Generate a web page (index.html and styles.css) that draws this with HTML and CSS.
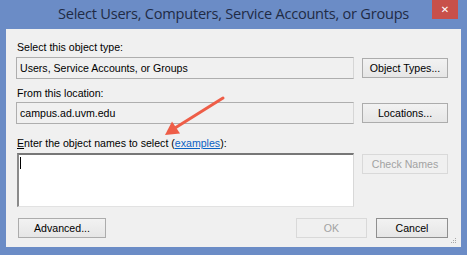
FILE: index.html
```html
<!DOCTYPE html>
<html>
<head>
<meta charset="utf-8">
<link rel="stylesheet" href="styles.css">
</head>
<body>
<div class="window">
  <div class="titlebar">
    <div class="title">Select Users, Computers, Service Accounts, or Groups</div>
    <div class="close">&#x2715;</div>
  </div>
  <div class="panel">
    <div class="label">Select this object type:</div>
    <div class="row">
      <div class="field">Users, Service Accounts, or Groups</div>
      <div class="btn">Object Types...</div>
    </div>
    <div class="label gap2">From this location:</div>
    <div class="row">
      <div class="field">campus.ad.uvm.edu</div>
      <div class="btn">Locations...</div>
    </div>
    <div class="label gap3"><u>E</u>nter the object names to select (<a class="link">examples</a>):</div>
    <div class="row top">
      <div class="textarea"><span class="caret"></span></div>
      <div class="btn disabled check">Check Names</div>
    </div>
    <div class="bottom">
      <div class="btn adv">Advanced...</div>
      <div class="spacer"></div>
      <div class="btn disabled ok">OK</div>
      <div class="btn cancel">Cancel</div>
    </div>
    <svg class="grip" width="7" height="7" viewBox="0 0 7 7">
      <rect x="5" y="1" width="1" height="1" fill="#a8a8a8"/>
      <rect x="3" y="3" width="1" height="1" fill="#a8a8a8"/>
      <rect x="5" y="3" width="1" height="1" fill="#a8a8a8"/>
      <rect x="1" y="5" width="1" height="1" fill="#a8a8a8"/>
      <rect x="3" y="5" width="1" height="1" fill="#a8a8a8"/>
      <rect x="5" y="5" width="1" height="1" fill="#a8a8a8"/>
    </svg>
  </div>
  <svg class="arrow" width="467" height="255" viewBox="0 0 467 255">
    <line x1="223" y1="98" x2="175" y2="128" stroke="#ee5d47" stroke-width="3" stroke-linecap="round"/>
    <polygon points="165,135 172,121.5 180,133.5" fill="#ee5d47"/>
  </svg>
</div>
</body>
</html>
```

FILE: styles.css
```css
html, body {
  margin: 0;
  padding: 0;
}
body {
  width: 467px;
  height: 255px;
  background: #6b8cc6;
  overflow: hidden;
}
.window {
  position: relative;
  width: 467px;
  height: 255px;
}
.titlebar {
  position: relative;
  height: 29px;
  display: flex;
  justify-content: center;
}
.title {
  font-family: "Open Sans", "Noto Sans", sans-serif;
  font-size: 14.6px;
  line-height: 26px;
  color: #1f2b45;
  letter-spacing: -0.25px;
}
.close {
  position: absolute;
  right: 9px;
  top: 0;
  width: 26px;
  height: 19px;
  background: #c8504a;
  color: #fff;
  font-family: "DejaVu Sans", sans-serif;
  font-size: 10px;
  font-weight: bold;
  line-height: 19px;
  text-align: center;
}
.panel {
  position: relative;
  margin: 0 6px;
  height: 218px;
  box-sizing: border-box;
  padding: 12px 13px 9px 10px;
  background: #f0f0f0;
  font-family: "Liberation Sans", Arial, sans-serif;
  font-size: 10.6px;
  color: #000;
  display: flex;
  flex-direction: column;
}
.label {
  height: 13px;
  line-height: 13px;
  padding-left: 1px;
  margin-bottom: 3px;
  white-space: nowrap;
}
.gap2 {
  margin-top: 8px;
  margin-bottom: 2px;
}
.gap3 {
  margin-top: 13px;
  margin-bottom: 3px;
}
.link {
  color: #0b62c4;
  text-decoration: underline;
}
.row {
  display: flex;
  align-items: center;
  gap: 8px;
}
.row.top {
  align-items: flex-start;
}
.field {
  width: 338px;
  height: 22px;
  box-sizing: border-box;
  border: 1px solid #aeaeae;
  border-right-color: #d6d6d6;
  background: #f0f0f0;
  line-height: 20px;
  padding-left: 3px;
  white-space: nowrap;
}
.btn {
  width: 86px;
  height: 20px;
  box-sizing: border-box;
  border: 1px solid #acacac;
  background: linear-gradient(#f2f2f2, #e6e6e6);
  line-height: 18px;
  text-align: center;
  white-space: nowrap;
}
.btn.disabled {
  color: #a2a2a2;
  border-color: #d9d9d9;
  background: #f0f0f0;
}
.textarea {
  position: relative;
  width: 337px;
  height: 54px;
  box-sizing: border-box;
  margin-left: 1px;
  background: #fff;
  border-top: 2px solid #777;
  border-left: 2px solid #8a8a8a;
  border-right: 1px solid #d8d8d8;
  border-bottom: 1px solid #e2e2e2;
}
.caret {
  display: block;
  margin: 2px 0 0 1px;
  width: 1px;
  height: 12px;
  background: #000;
}
.check {
  margin-top: 1px;
}
.bottom {
  display: flex;
  margin-top: 11px;
}
.spacer {
  flex: 1;
}
.adv {
  width: 88px;
  margin-left: 2px;
}
.ok {
  width: 71px;
  margin-right: 9px;
}
.cancel {
  width: 72px;
  border-color: #8f8f8f;
}
.grip {
  position: absolute;
  right: 4px;
  bottom: 3px;
}
.arrow {
  position: absolute;
  left: 0;
  top: 0;
  pointer-events: none;
}
```
